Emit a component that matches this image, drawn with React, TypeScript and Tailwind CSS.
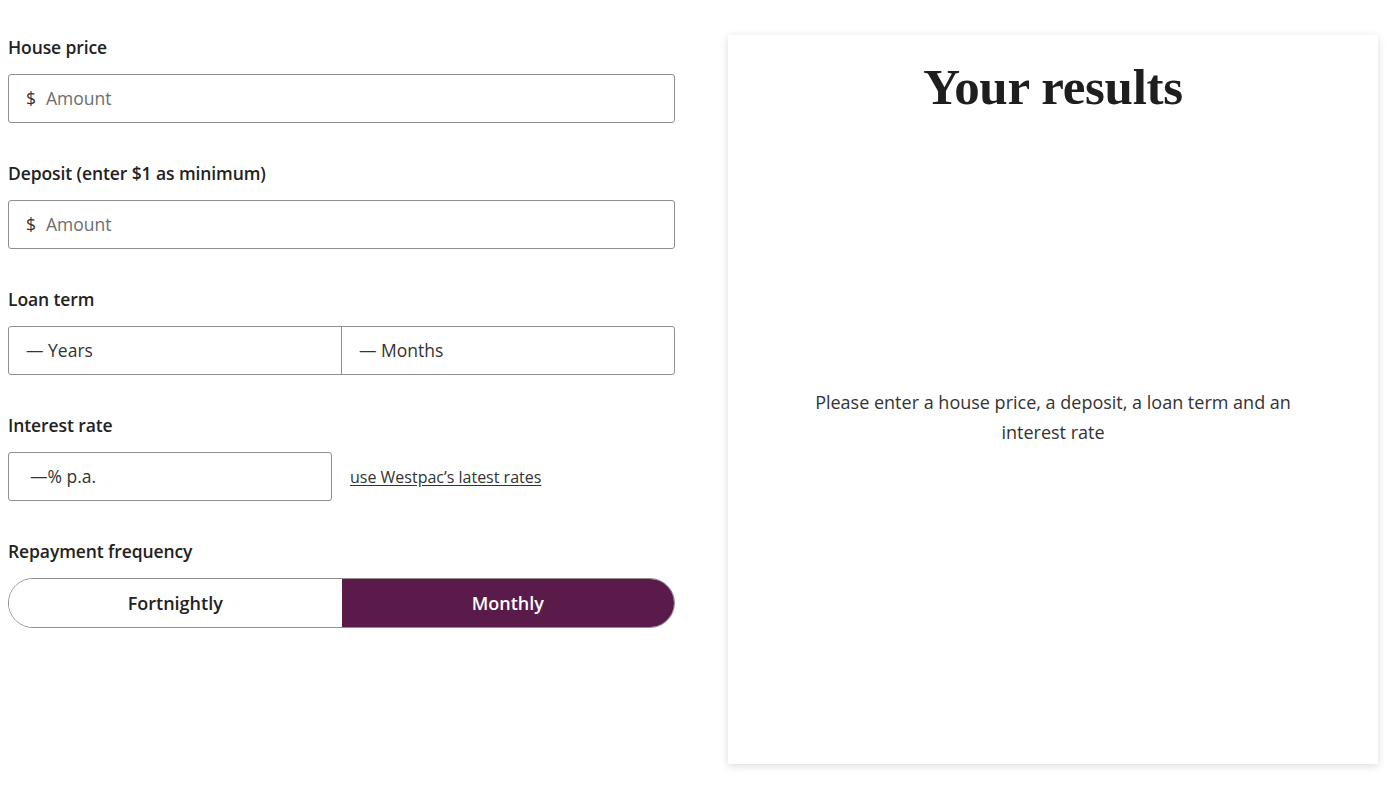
import React from "react";

const sans = { fontFamily: '"Open Sans", "Noto Sans", Arial, sans-serif' };

function Label({ children }: { children: React.ReactNode }) {
  return (
    <div className="text-[17.5px] leading-6 font-semibold text-[#222] mb-[15px] tracking-[-0.1px]">{children}</div>
  );
}

function AmountInput() {
  return (
    <div className="h-[49px] border border-[#8f8f8f] rounded-[3px] flex items-center pl-[17px] text-[17.5px]">
      <span className="text-[#333] mr-[10px]">$</span>
      <span className="text-[#6e6e6e]">Amount</span>
    </div>
  );
}

export default function App() {
  return (
    <div className="w-[1400px] h-[788px] bg-white flex items-start pt-[35px] pl-[8px]" style={sans}>
      <div className="w-[667px] flex flex-col gap-[38px]">
        <div>
          <Label>House price</Label>
          <AmountInput />
        </div>
        <div>
          <Label>Deposit (enter $1 as minimum)</Label>
          <AmountInput />
        </div>
        <div>
          <Label>Loan term</Label>
          <div className="h-[49px] border border-[#8f8f8f] rounded-[3px] flex text-[17.5px] text-[#333]">
            <div className="flex-1 flex items-center pl-[17px] border-r border-[#8f8f8f]">— Years</div>
            <div className="flex-1 flex items-center pl-[17px]">— Months</div>
          </div>
        </div>
        <div>
          <Label>Interest rate</Label>
          <div className="flex items-center">
            <div className="w-[324px] h-[49px] border border-[#8f8f8f] rounded-[3px] flex items-center pl-[21px] text-[17.5px] text-[#333]">
              —% p.a.
            </div>
            <a className="ml-[18px] text-[16px] text-[#333] underline underline-offset-2">use Westpac’s latest rates</a>
          </div>
        </div>
        <div>
          <Label>Repayment frequency</Label>
          <div className="h-[50px] flex rounded-full overflow-hidden border border-[#8f8f8f] text-[18px] font-semibold">
            <div className="flex-1 flex items-center justify-center text-[#222] bg-white">Fortnightly</div>
            <div className="flex-1 flex items-center justify-center text-white bg-[#5a1a4a]">Monthly</div>
          </div>
        </div>
      </div>
      <div className="ml-[53px] w-[650px] h-[729px] bg-white shadow-[0_2px_8px_rgba(0,0,0,0.14)] flex flex-col items-center">
        <h1
          className="mt-[22px] text-[51px] leading-[60px] font-bold text-[#1e1e1e] tracking-[-0.3px]"
          style={{ fontFamily: '"Liberation Serif", "DejaVu Serif", serif' }}
        >
          Your results
        </h1>
        <p className="mt-[270px] w-[500px] text-center text-[18px] leading-[30px] text-[#333]">
          Please enter a house price, a deposit, a loan term and an interest rate
        </p>
      </div>
    </div>
  );
}
